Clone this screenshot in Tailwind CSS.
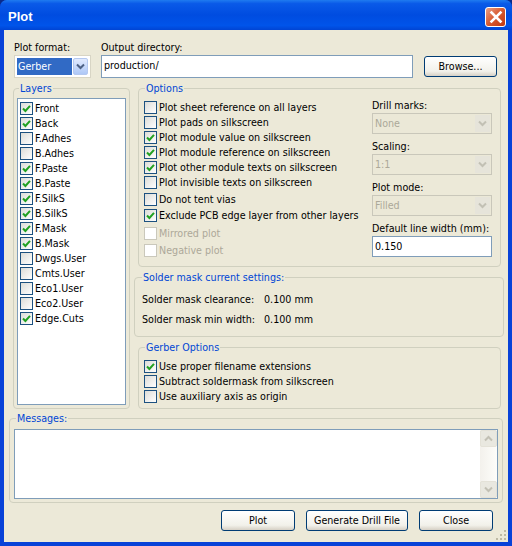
<!doctype html>
<html><head><meta charset="utf-8"><script src="https://cdn.jsdelivr.net/npm/@tailwindcss/browser@4"></script></head>
<body class="bg-[#0a2a8a]">
<div class="w-[512px] h-[546px] flex flex-col rounded-t-[7px] overflow-hidden bg-[#0842d8] font-['DejaVu_Sans_Condensed','DejaVu_Sans',sans-serif] text-[10.65px] leading-[15px] text-black">
  <div class="h-[30px] shrink-0 flex items-end justify-between pl-[8px] pr-[6px] pb-[3px] bg-[linear-gradient(180deg,#1f7bf0_0%,#0a5ae8_12%,#004ce0_50%,#0054ea_85%,#0044d4_100%)]">
    <span class="text-white font-bold text-[13px] leading-[20px] font-['Liberation_Sans',sans-serif]">Plot</span>
    <div class="w-[21px] h-[20px] rounded-[3px] border border-white bg-[linear-gradient(135deg,#e8a088,#d85a30_50%,#c03810)] flex items-center justify-center">
      <svg width="14" height="14" viewBox="0 0 14 14"><path d="M2.5 2.5 L11.5 11.5 M11.5 2.5 L2.5 11.5" stroke="#fff" stroke-width="2.6" stroke-linecap="square"/></svg>
    </div>
  </div>
  <div class="flex-1 mx-[4px] mb-[4px] bg-[#ece9d8] flex flex-col relative">
    <!-- top row -->
    <div class="flex pt-[10px] pl-[10px] h-[58px] shrink-0">
      <div class="w-[87px] shrink-0">
        <div class="h-[15px]">Plot format:</div>
        <div class="mt-[0px] w-[77px] h-[23px] bg-white border border-[#d8d5c5] p-[2px] flex justify-between">
          <span class="w-[55px] h-[17px] bg-[#316ac5] text-white pl-[1px] leading-[17px]">Gerber</span>
          <span class="w-[15px] h-[17px] rounded-[2px] border border-[#b4c8f0] bg-[linear-gradient(180deg,#e1eafe,#aec8f7)] flex items-center justify-center"><svg width="9" height="7" viewBox="0 0 9 7"><path d="M1 1.5 L4.5 5 L8 1.5" fill="none" stroke="#4d6185" stroke-width="2"/></svg></span>
        </div>
      </div>
      <div class="w-[312px] shrink-0">
        <div class="h-[15px]">Output directory:</div>
        <div class="h-[23px] bg-white border border-[#7f9db9] px-[2px] leading-[19px]">production/</div>
      </div>
      <button class="ml-[11px] mt-[16px] w-[73px] h-[21px] rounded-[3px] border border-[#003c74] bg-[linear-gradient(180deg,#ffffff,#f2f1ea_75%,#d6d0c5)] leading-[18px]">Browse...</button>
    </div>
    <!-- middle -->
    <div class="flex pl-[9px] h-[321px] shrink-0">
      <div class="relative w-[117px] h-[321px] shrink-0 border border-[#d0d0bf] rounded-[4px]">
        <span class="absolute left-[5px] -top-[8px] bg-[#ece9d8] px-[1px] text-[#0046d5]">Layers</span>
        <div class="mt-[9px] ml-[3px] w-[109px] h-[307px] bg-white border border-[#7f9db9] pt-[2px] pl-[2px] flex flex-col">
          <label class="flex items-center gap-[2px] h-[15px]"><span class="w-[13px] h-[13px] border border-[#1c5180] bg-[linear-gradient(135deg,#dcdcd7,#ffffff)] flex items-center justify-center"><svg width="9" height="9" viewBox="0 0 9 9"><path d="M1 4.5 L3.4 7 L8 1.8" fill="none" stroke="#21a121" stroke-width="2"/></svg></span>Front</label>
          <label class="flex items-center gap-[2px] h-[15px]"><span class="w-[13px] h-[13px] border border-[#1c5180] bg-[linear-gradient(135deg,#dcdcd7,#ffffff)] flex items-center justify-center"><svg width="9" height="9" viewBox="0 0 9 9"><path d="M1 4.5 L3.4 7 L8 1.8" fill="none" stroke="#21a121" stroke-width="2"/></svg></span>Back</label>
          <label class="flex items-center gap-[2px] h-[15px]"><span class="w-[13px] h-[13px] border border-[#1c5180] bg-[linear-gradient(135deg,#dcdcd7,#ffffff)]"></span>F.Adhes</label>
          <label class="flex items-center gap-[2px] h-[15px]"><span class="w-[13px] h-[13px] border border-[#1c5180] bg-[linear-gradient(135deg,#dcdcd7,#ffffff)]"></span>B.Adhes</label>
          <label class="flex items-center gap-[2px] h-[15px]"><span class="w-[13px] h-[13px] border border-[#1c5180] bg-[linear-gradient(135deg,#dcdcd7,#ffffff)] flex items-center justify-center"><svg width="9" height="9" viewBox="0 0 9 9"><path d="M1 4.5 L3.4 7 L8 1.8" fill="none" stroke="#21a121" stroke-width="2"/></svg></span>F.Paste</label>
          <label class="flex items-center gap-[2px] h-[15px]"><span class="w-[13px] h-[13px] border border-[#1c5180] bg-[linear-gradient(135deg,#dcdcd7,#ffffff)] flex items-center justify-center"><svg width="9" height="9" viewBox="0 0 9 9"><path d="M1 4.5 L3.4 7 L8 1.8" fill="none" stroke="#21a121" stroke-width="2"/></svg></span>B.Paste</label>
          <label class="flex items-center gap-[2px] h-[15px]"><span class="w-[13px] h-[13px] border border-[#1c5180] bg-[linear-gradient(135deg,#dcdcd7,#ffffff)] flex items-center justify-center"><svg width="9" height="9" viewBox="0 0 9 9"><path d="M1 4.5 L3.4 7 L8 1.8" fill="none" stroke="#21a121" stroke-width="2"/></svg></span>F.SilkS</label>
          <label class="flex items-center gap-[2px] h-[15px]"><span class="w-[13px] h-[13px] border border-[#1c5180] bg-[linear-gradient(135deg,#dcdcd7,#ffffff)] flex items-center justify-center"><svg width="9" height="9" viewBox="0 0 9 9"><path d="M1 4.5 L3.4 7 L8 1.8" fill="none" stroke="#21a121" stroke-width="2"/></svg></span>B.SilkS</label>
          <label class="flex items-center gap-[2px] h-[15px]"><span class="w-[13px] h-[13px] border border-[#1c5180] bg-[linear-gradient(135deg,#dcdcd7,#ffffff)] flex items-center justify-center"><svg width="9" height="9" viewBox="0 0 9 9"><path d="M1 4.5 L3.4 7 L8 1.8" fill="none" stroke="#21a121" stroke-width="2"/></svg></span>F.Mask</label>
          <label class="flex items-center gap-[2px] h-[15px]"><span class="w-[13px] h-[13px] border border-[#1c5180] bg-[linear-gradient(135deg,#dcdcd7,#ffffff)] flex items-center justify-center"><svg width="9" height="9" viewBox="0 0 9 9"><path d="M1 4.5 L3.4 7 L8 1.8" fill="none" stroke="#21a121" stroke-width="2"/></svg></span>B.Mask</label>
          <label class="flex items-center gap-[2px] h-[15px]"><span class="w-[13px] h-[13px] border border-[#1c5180] bg-[linear-gradient(135deg,#dcdcd7,#ffffff)]"></span>Dwgs.User</label>
          <label class="flex items-center gap-[2px] h-[15px]"><span class="w-[13px] h-[13px] border border-[#1c5180] bg-[linear-gradient(135deg,#dcdcd7,#ffffff)]"></span>Cmts.User</label>
          <label class="flex items-center gap-[2px] h-[15px]"><span class="w-[13px] h-[13px] border border-[#1c5180] bg-[linear-gradient(135deg,#dcdcd7,#ffffff)]"></span>Eco1.User</label>
          <label class="flex items-center gap-[2px] h-[15px]"><span class="w-[13px] h-[13px] border border-[#1c5180] bg-[linear-gradient(135deg,#dcdcd7,#ffffff)]"></span>Eco2.User</label>
          <label class="flex items-center gap-[2px] h-[15px]"><span class="w-[13px] h-[13px] border border-[#1c5180] bg-[linear-gradient(135deg,#dcdcd7,#ffffff)] flex items-center justify-center"><svg width="9" height="9" viewBox="0 0 9 9"><path d="M1 4.5 L3.4 7 L8 1.8" fill="none" stroke="#21a121" stroke-width="2"/></svg></span>Edge.Cuts</label>
        </div>
      </div>
      <div class="ml-[4px] w-[370px] shrink-0 flex flex-col">
        <!-- options -->
        <div class="relative ml-[4px] w-[363px] h-[179px] shrink-0 border border-[#d0d0bf] rounded-[4px] flex">
          <span class="absolute left-[6px] -top-[8px] bg-[#ece9d8] px-[1px] text-[#0046d5]">Options</span>
          <div class="w-[233px] shrink-0 pl-[5px] pt-[11px] flex flex-col">
            <label class="flex items-center gap-[2px] h-[15px] whitespace-nowrap"><span class="w-[13px] h-[13px] shrink-0 border border-[#1c5180] bg-[linear-gradient(135deg,#dcdcd7,#ffffff)]"></span>Plot sheet reference on all layers</label>
            <label class="flex items-center gap-[2px] h-[15px] whitespace-nowrap"><span class="w-[13px] h-[13px] shrink-0 border border-[#1c5180] bg-[linear-gradient(135deg,#dcdcd7,#ffffff)]"></span>Plot pads on silkscreen</label>
            <label class="flex items-center gap-[2px] h-[15px] whitespace-nowrap"><span class="w-[13px] h-[13px] shrink-0 border border-[#1c5180] bg-[linear-gradient(135deg,#dcdcd7,#ffffff)] flex items-center justify-center"><svg width="9" height="9" viewBox="0 0 9 9"><path d="M1 4.5 L3.4 7 L8 1.8" fill="none" stroke="#21a121" stroke-width="2"/></svg></span>Plot module value on silkscreen</label>
            <label class="flex items-center gap-[2px] h-[15px] whitespace-nowrap"><span class="w-[13px] h-[13px] shrink-0 border border-[#1c5180] bg-[linear-gradient(135deg,#dcdcd7,#ffffff)] flex items-center justify-center"><svg width="9" height="9" viewBox="0 0 9 9"><path d="M1 4.5 L3.4 7 L8 1.8" fill="none" stroke="#21a121" stroke-width="2"/></svg></span>Plot module reference on silkscreen</label>
            <label class="flex items-center gap-[2px] h-[15px] whitespace-nowrap"><span class="w-[13px] h-[13px] shrink-0 border border-[#1c5180] bg-[linear-gradient(135deg,#dcdcd7,#ffffff)] flex items-center justify-center"><svg width="9" height="9" viewBox="0 0 9 9"><path d="M1 4.5 L3.4 7 L8 1.8" fill="none" stroke="#21a121" stroke-width="2"/></svg></span>Plot other module texts on silkscreen</label>
            <label class="flex items-center gap-[2px] h-[15px] whitespace-nowrap"><span class="w-[13px] h-[13px] shrink-0 border border-[#1c5180] bg-[linear-gradient(135deg,#dcdcd7,#ffffff)]"></span>Plot invisible texts on silkscreen</label>
            <label class="mt-[2px] flex items-center gap-[2px] h-[15px] whitespace-nowrap"><span class="w-[13px] h-[13px] shrink-0 border border-[#1c5180] bg-[linear-gradient(135deg,#dcdcd7,#ffffff)]"></span>Do not tent vias</label>
            <label class="mt-[1px] flex items-center gap-[2px] h-[15px] whitespace-nowrap"><span class="w-[13px] h-[13px] shrink-0 border border-[#1c5180] bg-[linear-gradient(135deg,#dcdcd7,#ffffff)] flex items-center justify-center"><svg width="9" height="9" viewBox="0 0 9 9"><path d="M1 4.5 L3.4 7 L8 1.8" fill="none" stroke="#21a121" stroke-width="2"/></svg></span>Exclude PCB edge layer from other layers</label>
            <label class="mt-[3px] flex items-center gap-[2px] h-[15px] whitespace-nowrap text-[#aca899]"><span class="w-[13px] h-[13px] shrink-0 border border-[#cac8bb] bg-white"></span>Mirrored plot</label>
            <label class="mt-[2px] flex items-center gap-[2px] h-[15px] whitespace-nowrap text-[#aca899]"><span class="w-[13px] h-[13px] shrink-0 border border-[#cac8bb] bg-white"></span>Negative plot</label>
          </div>
          <div class="w-[120px] shrink-0 pt-[9px] flex flex-col">
            <div class="h-[15px]">Drill marks:</div>
            <div class="h-[21px] border border-[#c9c7ba] bg-[#ebe8d7] flex justify-between text-[#aca899] pl-[2px] pr-[1px] pt-[1px]"><span class="leading-[17px]">None</span><span class="w-[15px] h-[17px] bg-[#e6e4da] flex items-center justify-center"><svg width="9" height="7" viewBox="0 0 9 7"><path d="M1 1.5 L4.5 5 L8 1.5" fill="none" stroke="#c2c0b4" stroke-width="2"/></svg></span></div>
            <div class="h-[15px] mt-[5px]">Scaling:</div>
            <div class="h-[21px] border border-[#c9c7ba] bg-[#ebe8d7] flex justify-between text-[#aca899] pl-[2px] pr-[1px] pt-[1px]"><span class="leading-[17px]">1:1</span><span class="w-[15px] h-[17px] bg-[#e6e4da] flex items-center justify-center"><svg width="9" height="7" viewBox="0 0 9 7"><path d="M1 1.5 L4.5 5 L8 1.5" fill="none" stroke="#c2c0b4" stroke-width="2"/></svg></span></div>
            <div class="h-[15px] mt-[5px]">Plot mode:</div>
            <div class="h-[21px] border border-[#c9c7ba] bg-[#ebe8d7] flex justify-between text-[#aca899] pl-[2px] pr-[1px] pt-[1px]"><span class="leading-[17px]">Filled</span><span class="w-[15px] h-[17px] bg-[#e6e4da] flex items-center justify-center"><svg width="9" height="7" viewBox="0 0 9 7"><path d="M1 1.5 L4.5 5 L8 1.5" fill="none" stroke="#c2c0b4" stroke-width="2"/></svg></span></div>
            <div class="h-[15px] mt-[5px] whitespace-nowrap">Default line width (mm):</div>
            <div class="h-[21px] border border-[#7f9db9] bg-white pl-[2px] leading-[19px]">0.150</div>
          </div>
        </div>
        <!-- solder -->
        <div class="relative mt-[10px] w-[370px] h-[60px] shrink-0 border border-[#d0d0bf] rounded-[4px] pl-[7px]">
          <span class="absolute left-[7px] -top-[8px] bg-[#ece9d8] px-[1px] text-[#0046d5] whitespace-nowrap">Solder mask current settings:</span>
          <div class="flex h-[15px] mt-[14px]"><span class="w-[122px] whitespace-nowrap">Solder mask clearance:</span><span>0.100 mm</span></div>
          <div class="flex h-[15px] mt-[5px]"><span class="w-[122px] whitespace-nowrap">Solder mask min width:</span><span>0.100 mm</span></div>
        </div>
        <!-- gerber -->
        <div class="relative mt-[10px] ml-[4px] w-[363px] h-[62px] shrink-0 border border-[#d0d0bf] rounded-[4px] pl-[5px] pt-[11px] flex flex-col">
          <span class="absolute left-[6px] -top-[8px] bg-[#ece9d8] px-[1px] text-[#0046d5]">Gerber Options</span>
          <label class="flex items-center gap-[2px] h-[15px]"><span class="w-[13px] h-[13px] shrink-0 border border-[#1c5180] bg-[linear-gradient(135deg,#dcdcd7,#ffffff)] flex items-center justify-center"><svg width="9" height="9" viewBox="0 0 9 9"><path d="M1 4.5 L3.4 7 L8 1.8" fill="none" stroke="#21a121" stroke-width="2"/></svg></span>Use proper filename extensions</label>
          <label class="flex items-center gap-[2px] h-[15px]"><span class="w-[13px] h-[13px] shrink-0 border border-[#1c5180] bg-[linear-gradient(135deg,#dcdcd7,#ffffff)]"></span>Subtract soldermask from silkscreen</label>
          <label class="flex items-center gap-[2px] h-[15px]"><span class="w-[13px] h-[13px] shrink-0 border border-[#1c5180] bg-[linear-gradient(135deg,#dcdcd7,#ffffff)]"></span>Use auxiliary axis as origin</label>
        </div>
      </div>
    </div>
    <!-- messages -->
    <div class="relative mt-[9px] ml-[5px] w-[494px] h-[85px] shrink-0 border border-[#d0d0bf] rounded-[4px] pl-[4px] pt-[10px]">
      <span class="absolute left-[6px] -top-[8px] bg-[#ece9d8] px-[1px] text-[#0046d5]">Messages:</span>
      <div class="w-[484px] h-[70px] bg-white border border-[#7f9db9] flex justify-end">
        <div class="w-[17px] h-[68px] bg-[linear-gradient(90deg,#f3f1ec,#fdfdfa)] flex flex-col justify-between">
          <span class="h-[17px] rounded-[2px] border border-[#e4e2d8] bg-[#e9e8e0] flex items-center justify-center"><svg width="9" height="7" viewBox="0 0 9 7"><path d="M1 5.5 L4.5 2 L8 5.5" fill="none" stroke="#c2c0b4" stroke-width="2"/></svg></span>
          <span class="h-[17px] rounded-[2px] border border-[#e4e2d8] bg-[#e9e8e0] flex items-center justify-center"><svg width="9" height="7" viewBox="0 0 9 7"><path d="M1 1.5 L4.5 5 L8 1.5" fill="none" stroke="#c2c0b4" stroke-width="2"/></svg></span>
        </div>
      </div>
    </div>
    <!-- buttons -->
    <div class="mt-[7px] flex pl-[217px]">
      <button class="w-[74px] h-[21px] rounded-[3px] border border-[#003c74] bg-[linear-gradient(180deg,#ffffff,#f2f1ea_75%,#d6d0c5)] leading-[18px]">Plot</button>
      <button class="ml-[11px] w-[102px] h-[21px] rounded-[3px] border border-[#003c74] bg-[linear-gradient(180deg,#ffffff,#f2f1ea_75%,#d6d0c5)] leading-[18px]">Generate Drill File</button>
      <button class="ml-[11px] w-[74px] h-[21px] rounded-[3px] border border-[#003c74] bg-[linear-gradient(180deg,#ffffff,#f2f1ea_75%,#d6d0c5)] leading-[18px]">Close</button>
    </div>
    <svg class="absolute right-[1px] bottom-[1px]" width="11" height="11" viewBox="0 0 11 11" fill="#bdb9a4"><rect x="8" y="0" width="2" height="2"/><rect x="4" y="4" width="2" height="2"/><rect x="8" y="4" width="2" height="2"/><rect x="0" y="8" width="2" height="2"/><rect x="4" y="8" width="2" height="2"/><rect x="8" y="8" width="2" height="2"/></svg>
  </div>
</div>
</body></html>
